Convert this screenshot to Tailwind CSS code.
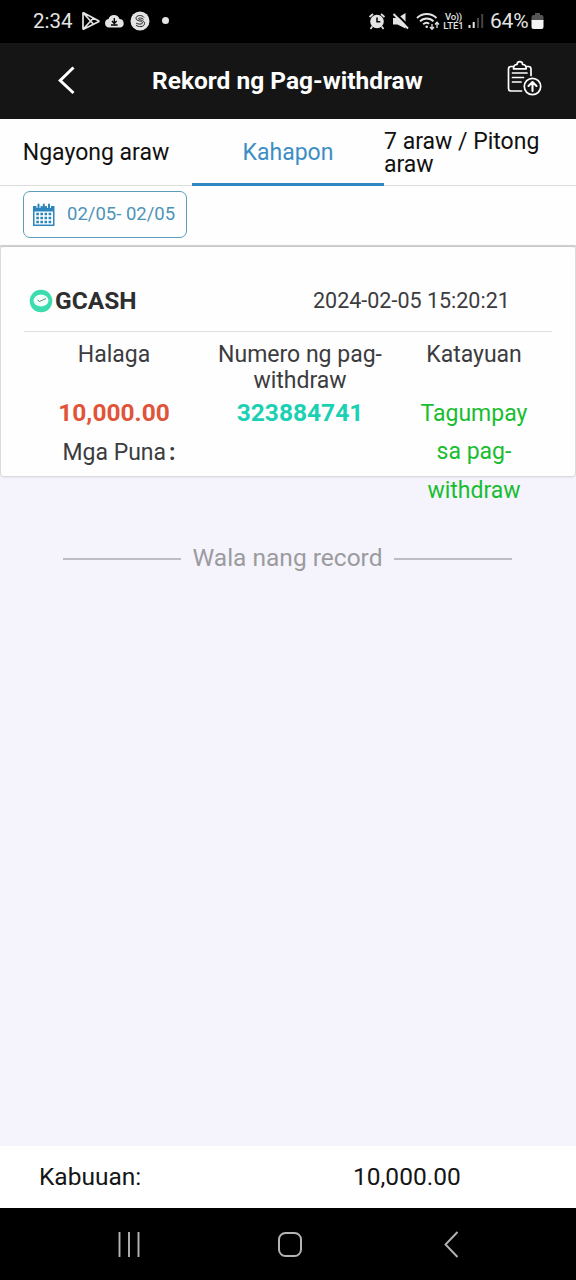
<!DOCTYPE html>
<html lang="fil">
<head>
<meta charset="utf-8">
<title>Rekord ng Pag-withdraw</title>
<script src="https://cdn.jsdelivr.net/npm/@tailwindcss/browser@4"></script>
</head>
<body class="bg-[#f5f4fc]">
<div class="flex h-[1280px] w-[576px] flex-col overflow-hidden font-['Roboto',sans-serif]">
  <!-- status bar -->
  <div class="flex h-[43px] shrink-0 items-center justify-between bg-black pb-[2px] pl-[33px] pr-[31px] text-[#e4e4e4]">
    <div class="flex items-center">
      <span class="w-[48px] text-[20.500px] leading-[40px]">2:34</span>
      <svg class="h-5 w-5" viewBox="0 0 20 20" fill="none" stroke="currentColor" stroke-width="1.7" stroke-linejoin="round"><path d="M2 2.4v15.2q0 .9.9.4L17.5 10.800q.8-.6 0-1.100L2.900 1.900Q2 1.500 2 2.400zM2.300 2l10.200 11.200M2.300 18L12.500 7"/></svg>
      <svg class="ml-[3px] h-5 w-[21px]" viewBox="0 0 21 20"><path fill="currentColor" d="M5 16.500a4.300 4.300 0 0 1-.5-8.500A5.800 5.800 0 0 1 15.500 8a4.300 4.300 0 0 1 .8 8.500z"/><path d="M10.300 7v5M8 10l2.300 2.500L12.600 10M7 14h6.600" stroke="#000" stroke-width="1.300" fill="none"/></svg>
      <svg class="ml-[5px] h-5 w-5" viewBox="0 0 20 20"><circle cx="10" cy="10" r="9.500" fill="currentColor"/><path d="M14 6.500C12.500 3.700 6 3.900 6 7.200c0 3.400 6.500 2.300 6.500 4.600 0 1.600-4.500 1.700-6.500.2M13.500 8.300C11.500 6.700 8.500 6.600 8.500 7.700c0 1.500 6 .9 6 4.800 0 3.700-6.500 4-8.500 1.500" stroke="#222" stroke-width="1" fill="none"/></svg>
      <span class="ml-[12px] h-[7px] w-[7px] rounded-full bg-current"></span>
    </div>
    <div class="flex items-center">
      <svg class="h-5 w-[18px]" viewBox="0 0 18 20"><circle cx="9" cy="10.500" r="6.800" fill="currentColor"/><path d="M1.500 6l3.500-3M16.500 6L13 3M4.200 15.500L2.500 18M13.800 15.500l1.700 2.500" stroke="currentColor" stroke-width="1.700"/><path d="M9 6.500v4.200h3.300" stroke="#000" stroke-width="1.500" fill="none"/></svg>
      <svg class="ml-[6px] h-5 w-[18px]" viewBox="0 0 18 20"><path fill="currentColor" d="M1 7h4.500L13.500 2v15.500L5.500 13.500H1z"/><path d="M3 1.500l15 15" stroke="#000" stroke-width="2.200"/><path d="M1.500 3l14.500 14.500" stroke="currentColor" stroke-width="1.900"/></svg>
      <svg class="ml-[6px] h-5 w-[24px]" viewBox="0 0 24 20" fill="none" stroke="currentColor" stroke-width="1.900"><path d="M1 7a14 14 0 0 1 19.500 0M4 10.300a9.500 9.500 0 0 1 13.500 0M7.200 13.300a5 5 0 0 1 6-.6"/><circle cx="10.700" cy="15.700" r="1.300" fill="currentColor" stroke="none"/><path stroke-width="1.300" d="M16 13v5M14 16l2 2.200 2-2.200M21 17v-5.500M19 13.500l2-2.200 2 2.200"/></svg>
      <div class="ml-[3px] w-[21px] text-center text-[9.500px] font-medium leading-[9px]"><div class="tracking-[-0.3px]">Vo))</div><div class="whitespace-nowrap">LTE1</div></div>
      <svg class="ml-[4px] h-5 w-[16px]" viewBox="0 0 16 20"><path d="M.5 14h2v3h-2zM4.700 11h2v6h-2z" fill="currentColor"/><path d="M9 7h2v10H9zM13.200 3h2v14h-2z" fill="#444"/></svg>
      <span class="ml-[6px] w-[39px] text-[21px] leading-[40px] tracking-[-0.2px]">64%</span>
      <svg class="ml-[2px] mr-px h-5 w-[13px]" viewBox="0 0 13 20"><path d="M4 2h5v2h1.500Q12.500 4 12.500 6v4H.5V6q0-2 2-2H4z" fill="#555"/><path d="M.5 9h12v7q0 2-2 2h-8q-2 0-2-2z" fill="#f4f4f4"/></svg>
    </div>
  </div>
  <!-- header -->
  <div class="flex h-[76px] shrink-0 items-center bg-[#151515] text-white">
    <svg class="ml-[57px] h-[30px] w-[20px]" viewBox="0 0 20 30" fill="none" stroke="currentColor" stroke-width="3"><path d="M16.500 1.500L3.200 14.500 16.500 27"/></svg>
    <h1 class="ml-[75px] w-[272px] whitespace-nowrap text-[24.500px] font-bold">Rekord ng Pag-withdraw</h1>
    <svg class="ml-[82px] mt-[-6px] h-[36px] w-[36px]" viewBox="0 0 36 36" fill="none" stroke="currentColor" stroke-width="1.700" stroke-linecap="round" stroke-linejoin="round"><path d="M7.500 6.500H5Q2.500 6.500 2.500 9v19.500Q2.500 31 5 31h10.500M20 6.500h2.500Q25 6.500 25 9v6.500"/><path d="M7.500 8.800q0-4.300 3.500-4.300 0-2.800 2.800-2.800t2.800 2.800q3.600 0 3.600 4.300z"/><path d="M6.500 13h14.500M6.500 17.500h11M6.500 22h8.500"/><circle cx="26.500" cy="26.500" r="8.200"/><path stroke-width="2.100" d="M26.500 31v-8.500M22.500 26l4-4 4 4"/></svg>
  </div>
  <!-- tabs -->
  <div class="grid h-[67px] shrink-0 grid-cols-3 bg-[#fefefe] text-[23px] leading-[23px] text-[#111]">
    <div class="flex items-center justify-center border-b border-[#dcdcdc] pt-px">Ngayong araw</div>
    <div class="flex items-center justify-center border-b-[3px] border-[#3187c2] pt-[3px] text-[#3d8ec4]">Kahapon</div>
    <div class="flex items-center border-b border-[#dcdcdc] pt-px">7 araw / Pitong araw</div>
  </div>
  <!-- date filter -->
  <div class="h-[61px] shrink-0 border-b-2 border-[#d8d8da] bg-[#fefefe] pl-[23px] pt-[5px]">
    <button class="flex h-[47px] w-[164px] items-center rounded-[7px] border border-[#5b9dbb] pl-[8px] text-[18.500px] text-[#4d94b8]">
      <svg class="h-[24px] w-[24px]" viewBox="0 0 24 24"><path fill="#2c86bd" d="M1 3h21.500v20H1z"/><path fill="#fff" d="M2.500 8.500h18.500v13H2.500z"/><path stroke="#fff" stroke-width="4" d="M6.500 0v5M17 0v5"/><path stroke="#fff" stroke-width="3" d="M11.800 0v3.500"/><path stroke="#2c86bd" stroke-width="2" stroke-linecap="round" d="M6.500 1.500v3M11.800 1.500v2M17 1.500v3"/><path stroke="#2c86bd" stroke-width="2.600" stroke-dasharray="2.600 1.500" d="M4.300 11h15M4.300 15h15M4.300 19h15"/></svg>
      <span class="ml-[11px] whitespace-nowrap">02/05- 02/05</span>
    </button>
  </div>
  <!-- record card -->
  <div class="mx-px h-[229px] shrink-0 rounded-[3px] bg-[#fefefe] px-[23px] text-[23px] text-[#3c3c3e] shadow-[0_0_3px_#aaa]">
    <div class="flex h-[85px] items-center border-b border-[#dfdfdf] pt-[23px]">
      <svg class="ml-[5px] h-[24px] w-[24px]" viewBox="0 0 24 24"><circle cx="12" cy="12" r="11.300" fill="#3bdcae"/><ellipse cx="12" cy="11.500" rx="7.500" ry="6" fill="#f3fffb"/><path d="M8.500 11l2 1.500 6.500-3" stroke="#5c8b7e" stroke-width="1" fill="none"/></svg>
      <span class="ml-[2px] w-[258px] text-[24.500px] font-bold leading-[36px] text-[#2e2e30]">GCASH</span>
      <span class="whitespace-nowrap pt-[2px] text-[21.500px]">2024-02-05 15:20:21</span>
    </div>
    <div class="grid grid-cols-[180px_192px_156px] text-center leading-[26px]">
      <div class="pt-[10px]">
        <div class="h-[52px]">Halaga</div>
        <div class="h-[39px] text-[24.500px] font-bold leading-[38px] text-[#e0543a]">10,000.00</div>
        <div class="pl-[10px] leading-[40px]">Mga Puna<span class="ml-[3px] font-bold">:</span></div>
      </div>
      <div class="pt-[10px]">
        <div class="h-[52px]">Numero ng pag-<br>withdraw</div>
        <div class="h-[39px] text-[24.500px] font-bold leading-[38px] text-[#1cd0b4]">323884741</div>
      </div>
      <div class="pt-[10px]">
        <div class="h-[52px]">Katayuan</div>
        <div class="mt-px leading-[38.300px] text-[#18bd30]">Tagumpay<br>sa pag-<br>withdraw</div>
      </div>
    </div>
  </div>
  <!-- end of list -->
  <div class="flex h-[670px] shrink-0 justify-center pt-[65px]">
    <div class="flex h-[34px] items-center text-[24.500px] text-[#9b9b9f]">
      <span class="mt-[2px] h-[2px] w-[118px] bg-[#bcbcc2]"></span>
      <span class="mx-[11px] w-[191px] whitespace-nowrap text-center">Wala nang record</span>
      <span class="mr-px mt-[2px] h-[2px] w-[118px] bg-[#bcbcc2]"></span>
    </div>
  </div>
  <!-- totals -->
  <div class="flex h-[62px] shrink-0 items-center bg-white pl-[39px] text-[24.500px] text-[#151515]">
    <span class="w-[314px]">Kabuuan:</span>
    <span>10,000.00</span>
  </div>
  <!-- navigation bar -->
  <div class="flex h-[72px] shrink-0 items-center bg-black pl-[116px] text-[#b4b4b4]">
    <svg class="h-[28px] w-[26px]" viewBox="0 0 26 28" stroke="currentColor" stroke-width="1.900"><path d="M3.500 2v25M13 2v25M22.500 2v25"/></svg>
    <svg class="ml-[134px] h-[28px] w-[28px]" viewBox="0 0 28 28" fill="none" stroke="currentColor" stroke-width="2"><rect x="3" y="3" width="22" height="23" rx="6.500"/></svg>
    <svg class="ml-[138px] h-[30px] w-[18px]" viewBox="0 0 18 30" fill="none" stroke="currentColor" stroke-width="1.900"><path d="M15.500 3L3.500 15.500 15.500 28"/></svg>
  </div>
</div>
</body>
</html>
